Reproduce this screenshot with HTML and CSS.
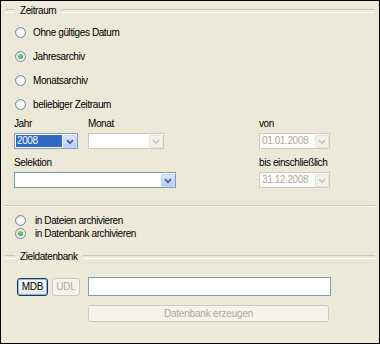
FILE: index.html
```html
<!DOCTYPE html>
<html lang="de">
  <head>
    <meta charset="UTF-8" />
    <title>Archivierung</title>
    <link rel="stylesheet" href="styles.css">
  </head>
  <body>
    <div class="panel">
      <div class="group-title"><span>Zeitraum</span></div>

      <ul class="radios period">
        <li><span class="radio"></span>Ohne gültiges Datum</li>
        <li><span class="radio checked"></span>Jahresarchiv</li>
        <li><span class="radio"></span>Monatsarchiv</li>
        <li><span class="radio"></span>beliebiger Zeitraum</li>
      </ul>

      <div class="filters">
        <div class="col left">
          <div class="pair">
            <div class="field jahr">
              <label>Jahr</label>
              <div class="combo">
                <span class="value selected">2008</span>
                <span class="drop"><svg width="8" height="6" viewBox="0 0 8 6"><path d="M1 1.2 L4 4.2 L7 1.2" /></svg></span>
              </div>
            </div>
            <div class="field monat">
              <label>Monat</label>
              <div class="combo disabled">
                <span class="value"></span>
                <span class="drop"><svg width="8" height="6" viewBox="0 0 8 6"><path d="M1 1.2 L4 4.2 L7 1.2" /></svg></span>
              </div>
            </div>
          </div>
          <div class="field selektion">
            <label>Selektion</label>
            <div class="combo">
              <span class="value"></span>
              <span class="drop"><svg width="8" height="6" viewBox="0 0 8 6"><path d="M1 1.2 L4 4.2 L7 1.2" /></svg></span>
            </div>
          </div>
        </div>

        <div class="col right">
          <div class="field">
            <label>von</label>
            <div class="combo disabled">
              <span class="value">01.01.2008</span>
              <span class="drop"><svg width="8" height="6" viewBox="0 0 8 6"><path d="M1 1.2 L4 4.2 L7 1.2" /></svg></span>
            </div>
          </div>
          <div class="field">
            <label>bis einschließlich</label>
            <div class="combo disabled">
              <span class="value">31.12.2008</span>
              <span class="drop"><svg width="8" height="6" viewBox="0 0 8 6"><path d="M1 1.2 L4 4.2 L7 1.2" /></svg></span>
            </div>
          </div>
        </div>
      </div>

      <div class="sep"></div>

      <ul class="radios target">
        <li><span class="radio"></span>in Dateien archivieren</li>
        <li><span class="radio checked"></span>in Datenbank archivieren</li>
      </ul>

      <div class="group-title db-title"><span>Zieldatenbank</span></div>

      <div class="db">
        <button class="btn default">MDB</button>
        <button class="btn" disabled>UDL</button>
        <input class="path" type="text" />
        <button class="btn create" disabled>Datenbank erzeugen</button>
      </div>
    </div>
  </body>
</html>
```

FILE: styles.css
```css
* {
  box-sizing: border-box;
}

body {
  margin: 0;
  font-family: "Liberation Sans", Arial, sans-serif;
  font-size: 10px;
  letter-spacing: -0.4px;
  color: #000;
}

.panel {
  width: 380px;
  height: 344px;
  border: 1px solid #000;
  background: #ece9d8;
  padding: 3px 4px 0 4px;
}

/* group box heading: etched line with text */
.group-title {
  display: flex;
  align-items: center;
  height: 13px;
}

.group-title::before,
.group-title::after {
  content: "";
  height: 2px;
  border-top: 1px solid #c9c6b4;
  border-bottom: 1px solid #fff;
}

.group-title::before {
  width: 10px;
}

.group-title::after {
  flex: 1;
}

.group-title span {
  padding: 0 5px;
  line-height: 13px;
}

/* radio lists */
.radios {
  list-style: none;
  margin: 0;
  padding: 0 0 0 10px;
}

.radios li {
  display: flex;
  align-items: center;
  gap: 7px;
}

.period {
  margin-top: 3px;
}

.period li {
  height: 24px;
}

.target {
  margin-top: 7px;
}

.target li {
  height: 13px;
  gap: 9px;
}

.radio {
  width: 11px;
  height: 11px;
  border-radius: 50%;
  border: 1px solid #6f88a6;
  background: radial-gradient(circle at 60% 65%, #fff 20%, #dcdad0 100%);
  display: grid;
  place-items: center;
}

.radio.checked::after {
  content: "";
  width: 5px;
  height: 5px;
  border-radius: 50%;
  background: radial-gradient(circle at 40% 35%, #7fd17f, #21a121);
}

/* date / selection filters */
.filters {
  display: grid;
  grid-template-columns: 162px 71px;
  column-gap: 83px;
  padding-left: 9px;
}

.col {
  display: flex;
  flex-direction: column;
  gap: 6px;
}

.pair {
  display: flex;
  gap: 10px;
}

.field {
  display: flex;
  flex-direction: column;
}

.field label {
  height: 15px;
  line-height: 15px;
  margin-bottom: 2px;
}

.jahr {
  width: 64px;
}

.monat {
  width: 76px;
}

.combo {
  display: flex;
  height: 16px;
  border: 1px solid #7f9db9;
  background: #fff;
}

.combo .value {
  flex: 1;
  margin: 1px;
  padding-left: 1px;
  line-height: 12px;
  white-space: nowrap;
  overflow: hidden;
}

.combo .value.selected {
  background: #316ac5;
  color: #fff;
}

.combo .drop {
  width: 14px;
  margin: 1px 0 0;
  height: 13px;
  border-radius: 2px;
  background: linear-gradient(#dce6fd, #b6cbf9);
  border: 1px solid #c3d3fd;
  display: grid;
  place-items: center;
}

.combo .drop path {
  fill: none;
  stroke: #4d6185;
  stroke-width: 1.8;
}

.combo.disabled {
  border-color: #cdcabb;
}

.combo.disabled .value {
  color: #aca899;
}

.combo.disabled .drop {
  background: #f3f2ea;
  border-color: #e6e4da;
}

.combo.disabled .drop path {
  stroke: #c9c7ba;
}

.sep {
  margin-top: 17px;
  height: 2px;
  border-top: 1px solid #c9c6b4;
  border-bottom: 1px solid #fff;
}

.db-title {
  margin-top: 10px;
}

/* target database row */
.db {
  display: grid;
  grid-template-columns: 31px 32px 243px;
  column-gap: 4px;
  row-gap: 9px;
  margin-top: 14px;
  padding-left: 12px;
  align-items: center;
}

.btn {
  font: inherit;
  letter-spacing: -0.2px;
  height: 18px;
  padding: 0;
  border: 1px solid #003c74;
  border-radius: 3px;
  background: linear-gradient(#fff, #ecebe6 85%, #d6d0c5);
  color: #000;
}

.btn.default {
  box-shadow: inset 0 0 0 1px #9fb6d8;
}

.btn:disabled {
  border-color: #cdcabb;
  background: #f4f3ee;
  color: #aca899;
  width: 28px;
}

.path {
  height: 19px;
  border: 1px solid #7f9db9;
  background: #fff;
  margin: 0;
}

.btn.create {
  grid-column: 3;
  width: 241px;
  height: 17px;
}
```
